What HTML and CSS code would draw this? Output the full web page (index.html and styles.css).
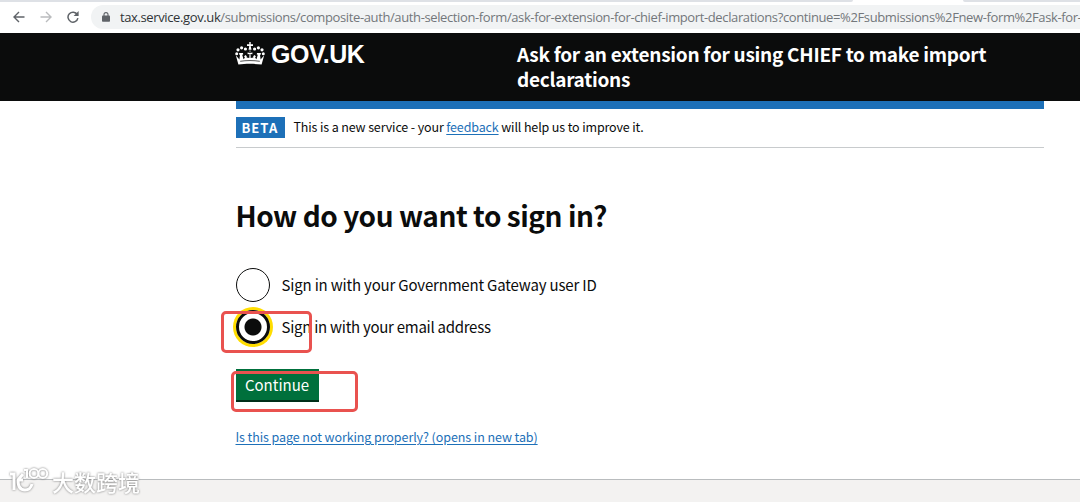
FILE: index.html
```html
<!DOCTYPE html>
<html lang="en">
  <head>
    <meta charset="UTF-8" />
    <meta name="viewport" content="width=device-width, initial-scale=1.0" />
    <title>How do you want to sign in?</title>
    <link rel="stylesheet" href="styles.css">
  </head>
  <body>
    <div class="tabs">
      <div class="tab-left"></div>
      <div class="tab-right"></div>
    </div>
    <div class="toolbar">
      <svg class="nav-icon" width="12" height="12" viewBox="0 0 12 12" fill="none" stroke="#5f6368" stroke-width="1.4">
        <path d="M11.5 6H1.2M6 1L1 6l5 5" />
      </svg>
      <svg class="nav-icon" width="12" height="12" viewBox="0 0 12 12" fill="none" stroke="#babcbe" stroke-width="1.4">
        <path d="M.5 6h10.3M6 1l5 5-5 5" />
      </svg>
      <svg class="nav-icon" width="12" height="12" viewBox="0 0 12 12">
        <path d="M10.3 3.6A5 5 0 1 0 10.9 7.2" fill="none" stroke="#5f6368" stroke-width="1.5" />
        <path d="M11.6 0v5H6.6z" fill="#5f6368" />
      </svg>
      <div class="address">
        <svg class="lock" width="8" height="10" viewBox="0 0 8 10">
          <path d="M2 4V2.6a2 2 0 0 1 4 0V4" fill="none" stroke="#5f6368" stroke-width="1.1" />
          <rect x="0" y="3.6" width="8" height="6.2" rx="0.8" fill="#5f6368" />
        </svg>
        <span class="url"><span class="host">tax.service.gov.uk</span>/submissions/composite-auth/auth-selection-form/ask-for-extension-for-chief-import-declarations?continue=%2Fsubmissions%2Fnew-form%2Fask-for-</span>
      </div>
    </div>

    <header class="header">
      <div class="logo">
        <svg class="crown" width="30" height="23" viewBox="0 0 30 23" fill="#fff">
          <circle cx="1.7" cy="11.7" r="1.5" />
          <circle cx="3" cy="7.8" r="1.6" />
          <circle cx="6.6" cy="5.8" r="1.6" />
          <circle cx="10.4" cy="7" r="1.6" />
          <circle cx="28.3" cy="11.7" r="1.5" />
          <circle cx="27" cy="7.8" r="1.6" />
          <circle cx="23.4" cy="5.8" r="1.6" />
          <circle cx="19.6" cy="7" r="1.6" />
          <path d="M14.3 0h1.4v2.2h2.3v1.7h-2.3l.8 3.8h-3l.8-3.8H12V2.2h2.3z" />
          <path d="M3.4 22.6L.8 13.3l3.6 4.3.6-4.8-1-.2.2-1.5 3.8-.2.2 1.6-1 .3 1.3 4.4 1.4-1.4-.8-1.5 1.5-1.2 1.2 1.2-.2 1.2 2.7.5.2-3.9-1.9.2V10.5l2.4.4-.5-2.3h1l-.5 2.3 2.4-.4v1.8l-1.9-.2.2 3.9 2.7-.5-.2-1.2 1.2-1.2 1.5 1.2-.8 1.5 1.4 1.4 1.3-4.4-1-.3.2-1.6 3.8.2.2 1.5-1 .2.6 4.8 3.6-4.3-2.6 9.3c-7-1-16.2-1-23.2 0z" />
          <path d="M5.2 19.3c6-1 13.6-1 19.6 0" fill="none" stroke="#0b0c0c" stroke-width="0.7" />
        </svg>
        <span class="logo-text">GOV.UK</span>
      </div>
      <div class="service-name">Ask for an extension for using CHIEF to make import declarations</div>
    </header>

    <main class="container">
      <div class="blue-bar"></div>
      <div class="phase-banner">
        <strong class="tag">BETA</strong>
        <span>This is a new service - your <a href="#">feedback</a> will help us to improve it.</span>
      </div>

      <h1>How do you want to sign in?</h1>

      <form>
        <label class="radio">
          <span class="circle"></span>
          Sign in with your Government Gateway user ID
        </label>
        <label class="radio radio-email">
          <span class="circle checked"></span>
          Sign in with your email address
        </label>
        <button class="button" type="button">Continue</button>
      </form>

      <a class="help-link" href="#">Is this page not working properly? (opens in new tab)</a>
    </main>

    <footer class="footer"></footer>

    <div class="marker marker-radio"></div>
    <div class="marker marker-button"></div>

    <div class="watermark">
      <svg width="40" height="28" viewBox="0 0 40 28" fill="none" stroke="#fff" stroke-width="3">
        <path d="M1 7h4v16M14 7l-5 6c0 7 3 10 7 10s6-2 7-6M9 13h5" />
        <path d="M15 3h3v8" stroke-width="2" />
        <circle cx="25" cy="6.5" r="4.4" stroke-width="2" />
        <circle cx="33.800" cy="6.5" r="4.4" stroke-width="2" />
      </svg>
      <span>大数跨境</span>
    </div>
  </body>
</html>
```
FILE: styles.css
```css
* {
  box-sizing: border-box;
}

body {
  margin: 0;
  height: 502px;
  display: flex;
  flex-direction: column;
  overflow: hidden;
  position: relative;
  background-color: white;
  color: #0b0c0c;
  font-family: "Noto Sans CJK SC", "Open Sans", sans-serif;
}

a {
  color: #1d70b8;
  text-decoration: underline;
  text-underline-offset: 2px;
}

.tabs {
  display: flex;
  justify-content: space-between;
  height: 2px;
}

.tab-left {
  width: 853px;
  background-color: #dee1e6;
  border-bottom-right-radius: 2px;
}

.tab-right {
  width: 117px;
  background-color: #dee1e6;
  border-bottom-left-radius: 2px;
}

.toolbar {
  display: flex;
  align-items: center;
  height: 31px;
  padding-left: 13px;
  padding-bottom: 1px;
}

.nav-icon {
  flex: none;
  margin-right: 15px;
}

.address {
  display: flex;
  align-items: center;
  flex: 1;
  min-width: 0;
  height: 24px;
  margin-left: -3px;
  padding-left: 11px;
  border-radius: 12px 0 0 12px;
  background-color: #f1f3f4;
}

.lock {
  flex: none;
  margin-right: 10px;
}

.url {
  font-family: "Open Sans", sans-serif;
  font-size: 13px;
  letter-spacing: -0.38px;
  white-space: nowrap;
  color: #73777b;
}

.host {
  color: #303336;
}

.header {
  display: flex;
  height: 68px;
  padding: 8px 36px 0 235px;
  background-color: #0b0c0c;
  color: white;
}

.logo {
  display: flex;
  width: 282px;
}

.crown {
  margin-top: 1px;
}

.logo-text {
  margin-left: 6px;
  font: bold 25px/26px "Liberation Sans", sans-serif;
  letter-spacing: -0.5px;
}

.service-name {
  width: 500px;
  font-size: 19px;
  font-weight: bold;
  line-height: 25px;
  letter-spacing: -0.27px;
}

.container {
  width: 808px;
  margin-left: 235.5px;
  flex: 1;
}

.blue-bar {
  height: 8px;
  background-color: #1d70b8;
}

.phase-banner {
  display: flex;
  align-items: center;
  height: 39px;
  padding-bottom: 2px;
  border-bottom: 1px solid #c8cbcd;
  font-size: 12.5px;
  line-height: 20px;
  letter-spacing: -0.135px;
}

.tag {
  width: 49px;
  height: 21px;
  margin-right: 9px;
  padding-left: 6px;
  background-color: #1d70b8;
  color: white;
  font-size: 13px;
  line-height: 21px;
  letter-spacing: 1px;
}

h1 {
  margin: 51px 0 37px;
  font-size: 28px;
  line-height: 32px;
  letter-spacing: -0.46px;
}

.radio {
  display: flex;
  align-items: center;
  height: 34px;
  margin-bottom: 8px;
  font-size: 15px;
  line-height: 34px;
  letter-spacing: -0.18px;
}

.radio-email {
  letter-spacing: -0.27px;
}

.circle {
  width: 34px;
  height: 34px;
  margin-right: 12px;
  border: 1.5px solid #0b0c0c;
  border-radius: 50%;
}

.checked {
  border-width: 3px;
  background: radial-gradient(circle, #0b0c0c 8px, white 9px);
  box-shadow: 0 0 0 3px #fd0;
}

.button {
  display: block;
  width: 83px;
  height: 33px;
  margin-top: 25px;
  padding: 0;
  border: 0;
  border-bottom: 2px solid #002d18;
  background-color: #00703c;
  color: white;
  font-family: inherit;
  font-size: 15px;
  line-height: 31px;
}

.help-link {
  display: inline-block;
  margin-top: 25px;
  font-size: 12.5px;
  line-height: 20px;
  letter-spacing: -0.08px;
}

.footer {
  height: 23px;
  border-top: 1px solid #b9bcbe;
  background-color: #f3f2f1;
}

/* red frames over the form */
.marker {
  position: absolute;
  border: 3px solid #e9524f;
  border-radius: 5px;
}

.marker-radio {
  left: 221px;
  top: 311px;
  width: 91px;
  height: 42px;
}

.marker-button {
  left: 231px;
  top: 371px;
  width: 127px;
  height: 41px;
}

.watermark {
  position: absolute;
  left: 9px;
  top: 467px;
  display: flex;
  color: white;
  font-size: 22px;
  font-weight: 500;
  line-height: 30px;
  filter: drop-shadow(0 0 1px #777);
}

.watermark span {
  margin-top: -1px;
  margin-left: 3px;
}
```
